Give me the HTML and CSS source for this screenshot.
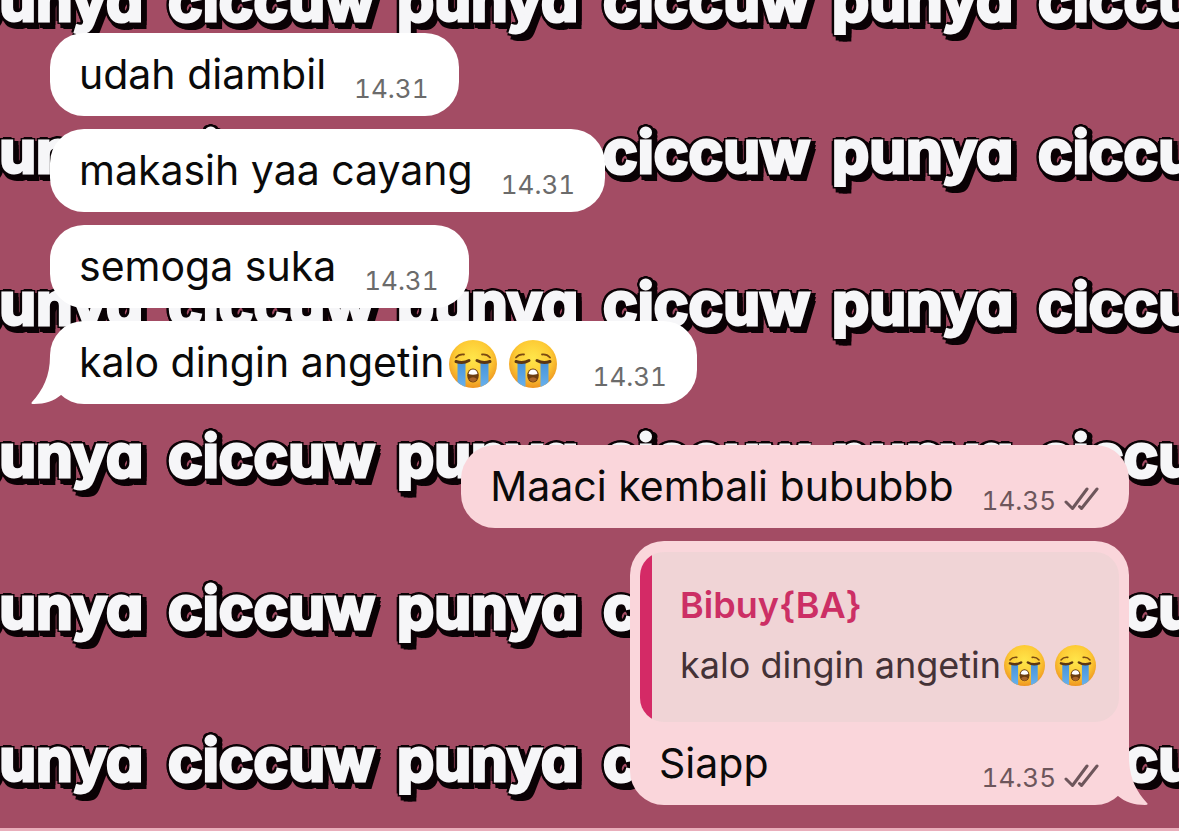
FILE: index.html
```html
<!DOCTYPE html>
<html lang="id">
<head>
<meta charset="utf-8">
<meta name="viewport" content="width=device-width, initial-scale=1">
<title>Chat</title>
<link rel="stylesheet" href="styles.css">
</head>
<body>
<svg class="defs" aria-hidden="true">
  <defs>
    <radialGradient id="face" cx="50%" cy="38%" r="62%">
      <stop offset="0" stop-color="#ffe64a"/><stop offset=".6" stop-color="#fdcb35"/><stop offset="1" stop-color="#ee9420"/>
    </radialGradient>
    <linearGradient id="tear" x1="0" y1="0" x2="0" y2="1">
      <stop offset="0" stop-color="#4792d8"/><stop offset="1" stop-color="#68b2ee"/>
    </linearGradient>
    <clipPath id="disc"><circle cx="24" cy="24" r="24"/></clipPath>
    <symbol id="cry" viewBox="0 0 48 48">
      <circle cx="24" cy="24" r="24" fill="url(#face)"/>
      <g clip-path="url(#disc)">
        <path d="M8.500 22h8v26h-8zM31.500 22h8v26h-8z" fill="url(#tear)"/>
      </g>
      <path d="M7 17.500Q10 14 15 14.500M33 14.500Q38 14 41 17.500" fill="none" stroke="#7a4a12" stroke-width="1.800" stroke-linecap="round"/>
      <path d="M7 21.500Q14 24 20 20.500M28 20.500Q34 24 41 21.500" fill="none" stroke="#5d3812" stroke-width="3" stroke-linecap="round"/>
      <ellipse cx="24" cy="35.500" rx="5.800" ry="7" fill="#6b3d10"/>
      <path d="M19.500 34Q20 29.500 24 29.500T28.500 34Q24 35.500 19.500 34z" fill="#fff"/>
      <path d="M20 39Q24 35.500 28 39Q26.500 42 24 42T20 39z" fill="#a8642a"/>
    </symbol>
    <symbol id="ticks" viewBox="0 0 35 24">
      <path d="M2 15L8.500 21.500L23 2M15.500 19.500L17.500 21.500L33 2" fill="none" stroke="#6d565b" stroke-width="3" stroke-linecap="round" stroke-linejoin="round"/>
    </symbol>
    <symbol id="tail" viewBox="0 0 50 54">
      <path d="M20 6C20 26 13 40 2 52Q0 54 4 54C15 54 24 51 31 45L50 45V6z" fill="currentColor"/>
    </symbol>
  </defs>
</svg>
<div class="chat">
  <div class="wallpaper" aria-hidden="true">
    <div class="row"><span>punya</span><span>ciccuw</span><span>punya</span><span>ciccuw</span><span>punya</span><span>ciccuw</span></div>
    <div class="row"><span>punya</span><span>ciccuw</span><span>punya</span><span>ciccuw</span><span>punya</span><span>ciccuw</span></div>
    <div class="row"><span>punya</span><span>ciccuw</span><span>punya</span><span>ciccuw</span><span>punya</span><span>ciccuw</span></div>
    <div class="row"><span>punya</span><span>ciccuw</span><span>punya</span><span>ciccuw</span><span>punya</span><span>ciccuw</span></div>
    <div class="row"><span>punya</span><span>ciccuw</span><span>punya</span><span>ciccuw</span><span>punya</span><span>ciccuw</span></div>
    <div class="row"><span>punya</span><span>ciccuw</span><span>punya</span><span>ciccuw</span><span>punya</span><span>ciccuw</span></div>
  </div>
  <main class="messages">
    <div class="bubble in"><div class="line"><p>udah diambil</p><time>14.31</time></div></div>
    <div class="bubble in"><div class="line"><p>makasih yaa cayang</p><time>14.31</time></div></div>
    <div class="bubble in"><div class="line"><p>semoga suka</p><time>14.31</time></div></div>
    <div class="bubble in">
      <svg class="tail" aria-hidden="true"><use href="#tail"/></svg>
      <div class="line"><p>kalo dingin angetin<svg class="emoji" role="img" aria-label="menangis"><use href="#cry"/></svg><svg class="emoji" role="img" aria-label="menangis"><use href="#cry"/></svg></p><time>14.31</time></div>
    </div>
    <div class="bubble out first"><div class="line"><p>Maaci kembali bububbb</p><time>14.35</time><svg class="ticks" role="img" aria-label="terkirim"><use href="#ticks"/></svg></div></div>
    <div class="bubble out">
      <svg class="tail" aria-hidden="true"><use href="#tail"/></svg>
      <blockquote class="quote">
        <strong>Bibuy{BA}</strong>
        <p>kalo dingin angetin<svg class="emoji" role="img" aria-label="menangis"><use href="#cry"/></svg><svg class="emoji" role="img" aria-label="menangis"><use href="#cry"/></svg></p>
      </blockquote>
      <div class="line"><p>Siapp</p><time>14.35</time><svg class="ticks" role="img" aria-label="terkirim"><use href="#ticks"/></svg></div>
    </div>
  </main>
</div>
</body>
</html>
```
FILE: styles.css
```css
* { box-sizing: border-box; }
body {
  margin: 0;
  background: #a34c64;
  font-family: Inter, "Liberation Sans", sans-serif;
  color: #0a0a0a;
}
p, blockquote { margin: 0; }
.defs { position: absolute; width: 0; height: 0; }
.chat {
  position: relative;
  min-height: 100vh;
  overflow: hidden;
  border-bottom: 3px solid #e9aebb;
}
.wallpaper {
  position: absolute;
  inset: -76px 0 0 -38px;
  overflow: hidden;
  font: bold 59px/152px Inter, "Liberation Sans", sans-serif;
  font-feature-settings: "cv11";
  color: #f6f6f8;
  -webkit-text-stroke: 3px #f6f6f8;
  text-shadow: -3px -3px #0a0205, 0 -4px #0a0205, 3px -3px #0a0205, -4px 0 #0a0205, -3px 3px #0a0205,
    4px 0 #0a0205, 0 4px #0a0205, 4px 4px #0a0205, 7px 0 #0a0205, 7px 4px #0a0205, 7px 8px #0a0205,
    3px 8px #0a0205, 0 7px #0a0205;
}
.row {
  display: grid;
  grid-template-columns: repeat(3, 206px 229px);
  height: 152px;
}
.messages {
  position: relative;
  display: flex;
  flex-direction: column;
  gap: 13px;
  padding: 33px 50px 23px;
}
.bubble {
  position: relative;
  max-width: 80%;
  border-radius: 34px;
}
.in { align-self: flex-start; background: #fff; color: #fff; }
.out { align-self: flex-end; background: #fad6db; color: #fad6db; }
.first { margin-top: 28px; }
.line {
  display: flex;
  align-items: flex-end;
  height: 83px;
  padding: 0 30px 0 29px;
}
.line p {
  flex: 1;
  margin-right: 28px;
  color: #0a0a0a;
  font-size: 41px;
  line-height: 83px;
  white-space: nowrap;
}
time {
  color: #6b6b6b;
  font-size: 26px;
  font-variant-numeric: tabular-nums;
  line-height: 54px;
}
.out time { color: #6d565b; }
.ticks { width: 35px; height: 24px; margin: 0 0 17px 8px; }
.emoji { width: 48px; height: 48px; margin: 0 8px 0 4px; vertical-align: -11px; }
.tail { position: absolute; bottom: 0; left: -20px; width: 50px; height: 54px; }
.out .tail { left: auto; right: -20px; transform: scaleX(-1); }
.quote {
  position: relative;
  display: flex;
  flex-direction: column;
  height: 170px;
  margin: 0 10px;
  padding: 23px 16px 0 40px;
  overflow: hidden;
  border-radius: 24px;
  background: linear-gradient(90deg, #d42a66 12px, #f0d4d6 12px);
}
.bubble:has(.quote) { padding-top: 11px; }
.quote strong { color: #cc2f65; font-size: 36px; font-weight: 600; line-height: 60px; }
.quote p { color: #443236; font-size: 36px; line-height: 60px; white-space: nowrap; }
.quote .emoji { width: 41px; height: 41px; margin: 0 7px 0 3px; vertical-align: -8px; }
```
